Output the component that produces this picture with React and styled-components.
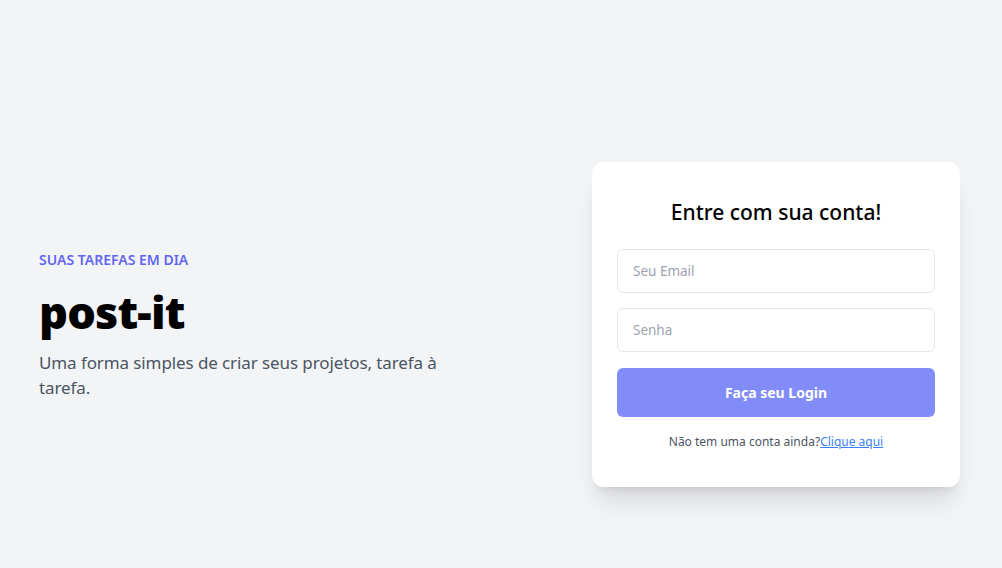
import React from "react";
import styled, { createGlobalStyle } from "styled-components";

const Global = createGlobalStyle`
  * { box-sizing: border-box; }
  html, body { margin: 0; padding: 0; background: #f3f4f6; }
  body { font-family: "Noto Sans", "Open Sans", sans-serif; color: #111827; }
`;

const Page = styled.main`
  min-height: 568px;
  padding: 80px 42px 0 39px;
  display: flex;
  align-items: center;
  justify-content: space-between;
`;

const Intro = styled.section`
  width: 410px;
  padding-top: 2px;
  display: flex;
  flex-direction: column;
`;

const Eyebrow = styled.p`
  margin: 0;
  font-size: 14px;
  line-height: 20px;
  font-weight: 600;
  color: #6366f1;
`;

const Title = styled.h1`
  margin: 14px 0 0;
  font-size: 45px;
  line-height: 56px;
  font-weight: 900;
  color: #000;
  letter-spacing: -0.8px;
`;

const Lead = styled.p`
  margin: 10px 0 0;
  font-size: 17px;
  line-height: 25px;
  color: #4b5563;
  letter-spacing: -0.1px;
`;

const Card = styled.section`
  width: 368px;
  background: #fff;
  border-radius: 12px;
  padding: 34px 25px 35px;
  box-shadow: 0 20px 25px -5px rgba(0, 0, 0, 0.1), 0 8px 10px -6px rgba(0, 0, 0, 0.1);
  display: flex;
  flex-direction: column;
`;

const CardTitle = styled.h2`
  margin: 0 0 21px;
  text-align: center;
  font-size: 21px;
  line-height: 32px;
  font-weight: 500;
  color: #000;
`;

const Form = styled.form`
  display: flex;
  flex-direction: column;
  gap: 15px;
`;

const Input = styled.input`
  height: 44px;
  width: 100%;
  border: 1px solid #e5e7eb;
  border-radius: 6px;
  padding: 0 15px;
  font-family: inherit;
  font-size: 13.5px;
  color: #111827;
  background: #fff;
  outline: none;
  &::placeholder { color: #9ca3af; }
`;

const Button = styled.button`
  margin-top: 1px;
  height: 49px;
  border: 0;
  border-radius: 6px;
  background: #818cf8;
  color: #fff;
  font-family: inherit;
  font-size: 14px;
  font-weight: 700;
  cursor: pointer;
`;

const Footer = styled.p`
  margin: 15px 0 0;
  text-align: center;
  font-size: 12px;
  line-height: 20px;
  color: #4b5563;
`;

const Link = styled.a`
  color: #3b82f6;
  text-decoration: underline;
`;

export default function App() {
  return (
    <>
      <Global />
      <Page>
        <Intro>
          <Eyebrow>SUAS TAREFAS EM DIA</Eyebrow>
          <Title>post-it</Title>
          <Lead>Uma forma simples de criar seus projetos, tarefa à tarefa.</Lead>
        </Intro>
        <Card>
          <CardTitle>Entre com sua conta!</CardTitle>
          <Form onSubmit={(e) => e.preventDefault()}>
            <Input type="email" placeholder="Seu Email" />
            <Input type="password" placeholder="Senha" />
            <Button type="submit">Faça seu Login</Button>
          </Form>
          <Footer>
            Não tem uma conta ainda?<Link href="#">Clique aqui</Link>
          </Footer>
        </Card>
      </Page>
    </>
  );
}
